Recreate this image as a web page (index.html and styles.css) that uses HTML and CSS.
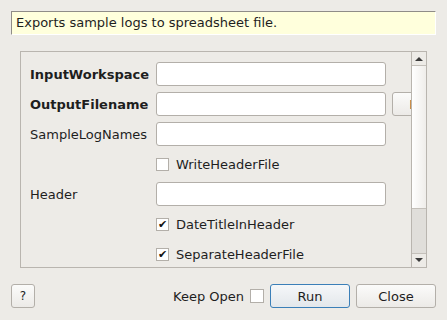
FILE: index.html
```html
<!DOCTYPE html>
<html lang="en">
<head>
  <meta charset="UTF-8" />
  <title>ExportSampleLogsToCSVFile</title>
  <link rel="stylesheet" href="styles.css">
</head>
<body>
  <div class="dialog">
    <div class="summary">Exports sample logs to spreadsheet file.</div>

    <div class="frame">
      <div class="viewport">
        <div class="props">
          <label class="name required">InputWorkspace</label>
          <input class="field" type="text" />
          <span></span>

          <label class="name required">OutputFilename</label>
          <input class="field" type="text" />
          <button class="btn browse">Browse</button>

          <label class="name">SampleLogNames</label>
          <input class="field" type="text" />
          <span></span>

          <span></span>
          <label class="check"><span class="box"></span>WriteHeaderFile</label>
          <span></span>

          <label class="name">Header</label>
          <input class="field" type="text" />
          <span></span>

          <span></span>
          <label class="check"><span class="box on">&#10004;</span>DateTitleInHeader</label>
          <span></span>

          <span></span>
          <label class="check"><span class="box on">&#10004;</span>SeparateHeaderFile</label>
          <span></span>
        </div>
      </div>
      <div class="scrollbar">
        <div class="arrow up"></div>
        <div class="handle"></div>
        <div class="groove"></div>
        <div class="arrow down"></div>
      </div>
    </div>

    <div class="footer">
      <button class="btn help">?</button>
      <span class="spacer"></span>
      <label class="keep">Keep Open <span class="box"></span></label>
      <button class="btn run">Run</button>
      <button class="btn close">Close</button>
    </div>
  </div>
</body>
</html>
```

FILE: styles.css
```css
body {
  margin: 0;
  background-color: #edebe7;
  font-family: "DejaVu Sans", sans-serif;
  font-size: 12px;
  color: #1e1e1e;
}
.dialog {
  width: 447px;
  height: 320px;
  padding: 11px 11px 0 11px;
  box-sizing: border-box;
}
.summary {
  height: 24px;
  box-sizing: border-box;
  background-color: #ffffdc;
  border-top: 1px solid #8f8c88;
  border-left: 1px solid #8f8c88;
  border-right: 1px solid #ffffff;
  border-bottom: 1px solid #ffffff;
  padding: 0 4px;
  line-height: 22px;
  font-size: 13px;
}
.frame {
  display: flex;
  margin: 16px 9px 0 9px;
  height: 217px;
  border: 1px solid #b9b5af;
  box-sizing: border-box;
}
.viewport {
  flex: 1;
  overflow: hidden;
}
.props {
  display: grid;
  grid-template-columns: 120px 230px 82px;
  grid-auto-rows: 24px;
  row-gap: 6px;
  column-gap: 6px;
  padding: 10px 0 0 9px;
  align-items: center;
}
.name {
  font-size: 13px;
}
.required {
  font-weight: bold;
}
.field {
  height: 24px;
  box-sizing: border-box;
  margin: 0;
  border: 1px solid #b3afa9;
  border-radius: 3px;
  background: #ffffff;
}
.check {
  display: flex;
  align-items: center;
  gap: 7px;
  font-size: 13px;
}
.box {
  display: inline-block;
  width: 13px;
  height: 13px;
  box-sizing: border-box;
  border: 1px solid #b3afa9;
  background: #ffffff;
  font-size: 11px;
  line-height: 11px;
  text-align: center;
  color: #111;
}
.btn {
  height: 24px;
  box-sizing: border-box;
  border: 1px solid #b3afa9;
  border-radius: 3px;
  background: linear-gradient(#fbfbfa, #eceae7);
  font-family: "DejaVu Sans", sans-serif;
  font-size: 13px;
  color: #1e1e1e;
  padding: 0;
}
.browse {
  width: 82px;
}
.scrollbar {
  width: 14px;
  display: flex;
  flex-direction: column;
  border-left: 1px solid #b9b5af;
}
.arrow {
  height: 14px;
  box-sizing: border-box;
  position: relative;
  background: #edebe7;
}
.arrow.up {
  border-bottom: 1px solid #c4c0ba;
}
.arrow.down {
  border-top: 1px solid #c4c0ba;
}
.arrow::after {
  content: "";
  position: absolute;
  left: 3px;
  top: 5px;
  border-left: 4px solid transparent;
  border-right: 4px solid transparent;
}
.arrow.up::after {
  border-bottom: 4px solid #3a3a3a;
}
.arrow.down::after {
  top: 4px;
  border-top: 4px solid #3a3a3a;
}
.handle {
  height: 143px;
  background: linear-gradient(to right, #ffffff, #efedea);
  border-bottom: 1px solid #c4c0ba;
  box-sizing: border-box;
}
.groove {
  flex: 1;
  background: #e0deda;
}
.footer {
  display: flex;
  align-items: center;
  margin-top: 16px;
  gap: 6px;
}
.help {
  width: 24px;
  font-size: 12px;
}
.spacer {
  flex: 1;
}
.keep {
  display: flex;
  align-items: center;
  gap: 6px;
  font-size: 13px;
}
.keep .box {
  width: 14px;
  height: 14px;
}
.run {
  width: 80px;
  border-color: #3b7fb8;
  background: linear-gradient(#f5f7f9, #e3e7eb);
}
.close {
  width: 80px;
}
```
